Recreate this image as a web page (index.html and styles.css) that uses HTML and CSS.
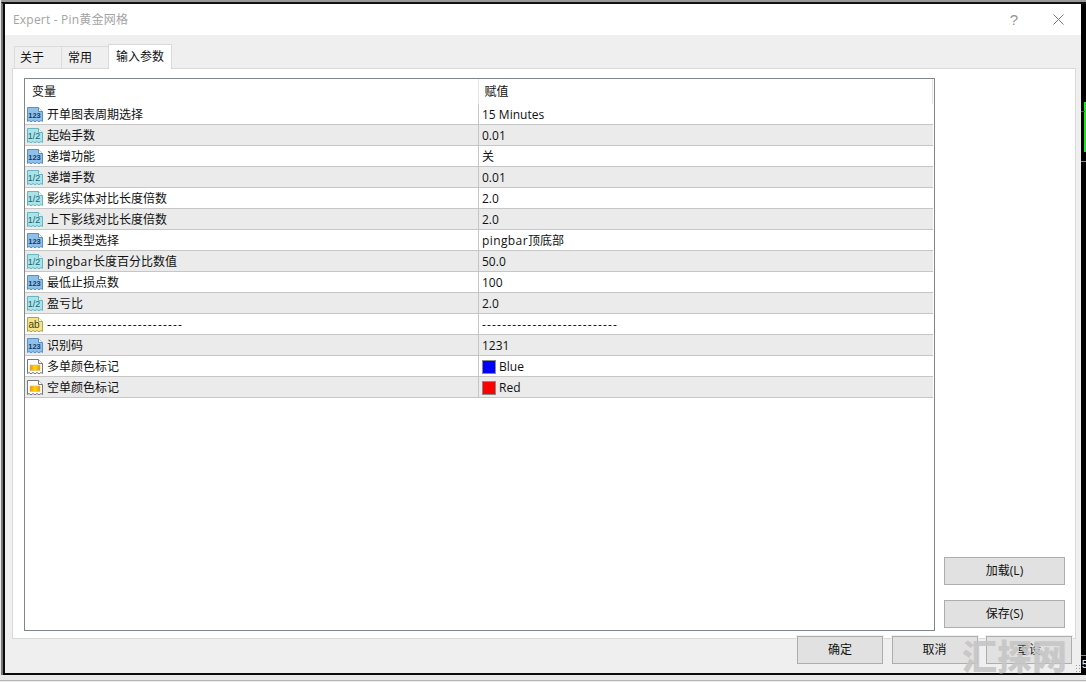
FILE: index.html
```html
<!DOCTYPE html>
<html lang="zh">
<head>
<meta charset="utf-8">
<title>Expert - Pin黄金网格</title>
<link rel="stylesheet" href="styles.css">
</head>
<body>
<svg class="defs" width="0" height="0" aria-hidden="true">
  <defs>
    <symbol id="page" viewBox="0 0 16 16">
      <path d="M.5 .5H11.5L15.5 4.5V14.5L14 13.5 12 14.8 10 13.5 8 14.8 6 13.5 4 14.8 2 13.5 .5 14.5Z" fill="currentColor" stroke="var(--edge)"/>
      <path d="M11.5 .5V4.5H15.5" fill="#fff" stroke="var(--edge)"/>
    </symbol>
    <linearGradient id="fire" x1="0" x2="1" y1="0" y2="0">
      <stop offset="0" stop-color="#ff8a00"/>
      <stop offset=".5" stop-color="#ffe000"/>
      <stop offset="1" stop-color="#ff8a00"/>
    </linearGradient>
  </defs>
</svg>
<div class="desk">
  <div class="window">
    <header class="titlebar">
      <span class="title">Expert - Pin黄金网格</span>
      <span class="help">?</span>
      <svg class="close" width="11" height="11" viewBox="0 0 11 11"><path d="M.5 .5L10.5 10.5M10.5 .5L.5 10.5" stroke="#7a7a7a" fill="none"/></svg>
    </header>
    <div class="body">
      <nav class="tabs">
        <span class="tab">关于</span>
        <span class="tab">常用</span>
        <span class="tab tab-active">输入参数</span>
      </nav>
      <section class="panel">
        <div class="table">
          <div class="thead">
            <span class="th th-name">变量</span>
            <span class="th th-value">赋值</span>
          </div>
          <div class="row"><span class="name"><svg class="ico ico-int" viewBox="0 0 16 16"><use href="#page"/><text x="7.5" y="11" class="ico-t">123</text></svg>开单图表周期选择</span><span class="value">15 Minutes</span></div>
          <div class="row"><span class="name"><svg class="ico ico-dbl" viewBox="0 0 16 16"><use href="#page"/><text x="7" y="11" class="ico-t ico-frac">1/2</text></svg>起始手数</span><span class="value">0.01</span></div>
          <div class="row"><span class="name"><svg class="ico ico-int" viewBox="0 0 16 16"><use href="#page"/><text x="7.5" y="11" class="ico-t">123</text></svg>递增功能</span><span class="value">关</span></div>
          <div class="row"><span class="name"><svg class="ico ico-dbl" viewBox="0 0 16 16"><use href="#page"/><text x="7" y="11" class="ico-t ico-frac">1/2</text></svg>递增手数</span><span class="value">0.01</span></div>
          <div class="row"><span class="name"><svg class="ico ico-dbl" viewBox="0 0 16 16"><use href="#page"/><text x="7" y="11" class="ico-t ico-frac">1/2</text></svg>影线实体对比长度倍数</span><span class="value">2.0</span></div>
          <div class="row"><span class="name"><svg class="ico ico-dbl" viewBox="0 0 16 16"><use href="#page"/><text x="7" y="11" class="ico-t ico-frac">1/2</text></svg>上下影线对比长度倍数</span><span class="value">2.0</span></div>
          <div class="row"><span class="name"><svg class="ico ico-int" viewBox="0 0 16 16"><use href="#page"/><text x="7.5" y="11" class="ico-t">123</text></svg>止损类型选择</span><span class="value"><span class="lat">pingbar</span>顶底部</span></div>
          <div class="row"><span class="name"><svg class="ico ico-dbl" viewBox="0 0 16 16"><use href="#page"/><text x="7" y="11" class="ico-t ico-frac">1/2</text></svg><span class="lat">pingbar</span>长度百分比数值</span><span class="value">50.0</span></div>
          <div class="row"><span class="name"><svg class="ico ico-int" viewBox="0 0 16 16"><use href="#page"/><text x="7.5" y="11" class="ico-t">123</text></svg>最低止损点数</span><span class="value">100</span></div>
          <div class="row"><span class="name"><svg class="ico ico-dbl" viewBox="0 0 16 16"><use href="#page"/><text x="7" y="11" class="ico-t ico-frac">1/2</text></svg>盈亏比</span><span class="value">2.0</span></div>
          <div class="row"><span class="name"><svg class="ico ico-str" viewBox="0 0 16 16"><use href="#page"/><text x="7" y="11" class="ico-t ico-ab">ab</text></svg><span class="dash">---------------------------</span></span><span class="value"><span class="dash">---------------------------</span></span></div>
          <div class="row"><span class="name"><svg class="ico ico-int" viewBox="0 0 16 16"><use href="#page"/><text x="7.5" y="11" class="ico-t">123</text></svg>识别码</span><span class="value">1231</span></div>
          <div class="row"><span class="name"><svg class="ico ico-col" viewBox="0 0 16 16"><use href="#page"/><rect x="3" y="6" width="10" height="5.5" fill="url(#fire)" stroke="#c9c080" stroke-width=".6"/></svg>多单颜色标记</span><span class="value"><i class="swatch swatch-blue"></i>Blue</span></div>
          <div class="row"><span class="name"><svg class="ico ico-col" viewBox="0 0 16 16"><use href="#page"/><rect x="3" y="6" width="10" height="5.5" fill="url(#fire)" stroke="#c9c080" stroke-width=".6"/></svg>空单颜色标记</span><span class="value"><i class="swatch swatch-red"></i>Red</span></div>
        </div>
        <aside class="side">
          <button class="btn btn-side">加载(L)</button>
          <button class="btn btn-side">保存(S)</button>
        </aside>
      </section>
      <footer class="footer">
        <button class="btn btn-foot">确定</button>
        <button class="btn btn-foot">取消</button>
        <button class="btn btn-foot">重设</button>
      </footer>
    </div>
    <span class="watermark">汇探网</span>
    <span class="grip"></span>
  </div>
  <div class="chart">
    <span class="candle"></span>
    <span class="red-tick"></span>
    <span class="rule rule-a"></span>
    <span class="rule rule-b"></span>
    <span class="tick">5</span>
  </div>
</div>
<div class="strip"></div>
</body>
</html>
```

FILE: styles.css
```css
* { box-sizing: border-box; }
html, body { margin: 0; height: 100%; }
body {
  width: 1086px;
  height: 682px;
  overflow: hidden;
  background: #e9e9e9;
  font: 12px/16px "Open Sans", "Noto Sans CJK SC", sans-serif;
  color: #111;
}
.defs { position: absolute; }
.desk {
  display: flex;
  height: 673px;
  margin: 2px 0 0 1px;
  border-left: 2px solid #777;
  border-top: 2px solid #111;
  box-shadow: 0 -2px 0 #9a9a9a;
}
.strip { height: 1px; margin-top: 5px; background: #b5b5b5; }
.window {
  position: relative;
  width: 1078px;
  display: flex;
  flex-direction: column;
  border-left: 2px solid #0a0a0a;
  border-bottom: 2px solid #0a0a0a;
}
.titlebar {
  height: 31px;
  flex: none;
  background: #fff;
  display: flex;
  align-items: center;
  padding-left: 8px;
  color: #a3a3a3;
}
.title { flex: 1; letter-spacing: .2px; padding-top: 1px; }
.help {
  width: 14px;
  margin-right: 32px;
  color: #959595;
  font: 15px/16px "Liberation Sans", sans-serif;
  text-align: center;
}
.close { margin-right: 17px; }
.body {
  flex: 1;
  background: #efefef;
  display: flex;
  flex-direction: column;
  padding: 8px 5px 0 7px;
  min-height: 0;
}
.tabs { display: flex; align-items: flex-end; height: 25px; padding-left: 2px; }
.tab {
  height: 22px;
  width: 47px;
  padding: 3px 0 0 5px;
  border-left: 1px solid #dcdcdc;
  border-top: 1px solid #dcdcdc;
  color: #111;
}
.tab + .tab { padding-left: 6px; }
.tab + .tab.tab-active {
  position: relative;
  z-index: 1;
  height: 25px;
  width: 64px;
  margin-bottom: -1px;
  padding: 4px 0 0 7px;
  background: #fff;
  border: 1px solid #d9d9d9;
  border-bottom: 0;
}
.panel {
  flex: none;
  height: 571px;
  background: #fff;
  border: 1px solid #d9d9d9;
  display: flex;
  padding: 9px 11px 6px 11px;
}
.table {
  width: 911px;
  height: 553px;
  border: 1px solid #7f878b;
  padding-right: 1px;
  background: #fff;
}
.thead { height: 25px; display: flex; }
.th { height: 25px; padding: 5px 0 0 6px; color: #111; }
.th-name { width: 454px; padding-left: 7px; border-right: 1px solid #e4e4e4; }
.th-value { width: 455px; border-right: 1px solid #e4e4e4; }
.row {
  height: 21px;
  display: flex;
  border-bottom: 1px solid #c6c6c6;
  align-items: stretch;
}
.row:nth-child(odd) { background: #ebebeb; }
.name {
  width: 454px;
  display: flex;
  align-items: center;
  padding: 2px 0 0 2px;
  border-right: 1px solid #c6c6c6;
  white-space: nowrap;
}
.value {
  display: flex;
  align-items: center;
  padding: 2px 0 0 3px;
  white-space: nowrap;
}
.lat { letter-spacing: .4px; }
.dash { letter-spacing: 1.18px; }
.ico { width: 16px; height: 16px; margin-right: 4px; flex: none; }
.ico-int { color: #8fc0ea; --edge: #5a8fc4; }
.ico-dbl { color: #a9e4ea; --edge: #6ab4c0; }
.ico-str { color: #f3e58e; --edge: #b5a24a; }
.ico-col { color: #fff; --edge: #777; }
.ico-t {
  font: 700 7.5px "Liberation Sans", sans-serif;
  text-anchor: middle;
  fill: #123a66;
}
.ico-t.ico-frac { font-size: 9px; font-weight: 400; fill: #1f5f6e; }
.ico-t.ico-ab { font-size: 10px; font-weight: 400; fill: #4a3c08; }
.swatch {
  width: 14px;
  height: 14px;
  margin-right: 3px;
  border: 1px solid #8a8a8a;
}
.swatch-blue { background: #0000ff; }
.swatch-red { background: #ff0000; }
.side {
  flex: 1;
  display: flex;
  flex-direction: column;
  align-items: flex-start;
  justify-content: flex-end;
  gap: 15px;
  padding: 0 0 4px 9px;
}
.btn {
  font: inherit;
  color: #111;
  background: #e1e1e1;
  border: 1px solid #adadad;
  padding: 0;
}
.btn-side { width: 121px; height: 28px; }
.footer {
  position: relative;
  z-index: 1;
  display: flex;
  justify-content: flex-end;
  gap: 8.5px;
  margin-top: -3px;
  padding-right: 4px;
}
.btn-foot { width: 86px; height: 28px; box-shadow: 0 0 0 1px #efefef; }
.watermark {
  position: absolute;
  z-index: 2;
  left: 957px;
  top: 632px;
  font: 900 35px/38px "Noto Sans CJK SC", sans-serif;
  color: rgba(198, 198, 198, .93);
  white-space: nowrap;
}
.grip {
  position: absolute;
  z-index: 3;
  right: 0;
  bottom: 1px;
  width: 6px;
  height: 8px;
  background: radial-gradient(circle, #9a9a9a 1px, transparent 1px) 0 0 / 3px 3px;
}
.chart {
  position: relative;
  flex: 1;
  overflow: hidden;
  background: #000;
}
.candle {
  position: absolute;
  left: 3px;
  top: 98px;
  width: 10px;
  height: 50px;
  border: 1px solid #22e022;
  border-left-width: 2px;
}
.red-tick { position: absolute; left: 0; top: 107px; width: 4px; height: 1px; background: #d02020; }
.rule { position: absolute; left: 0; width: 5px; height: 1px; background: #8a8a8a; }
.rule-a { top: 157px; }
.rule-b { top: 651px; }
.tick {
  position: absolute;
  left: 1px;
  top: 654px;
  color: #fff;
  font: 10px/14px "Liberation Sans", sans-serif;
}
```
